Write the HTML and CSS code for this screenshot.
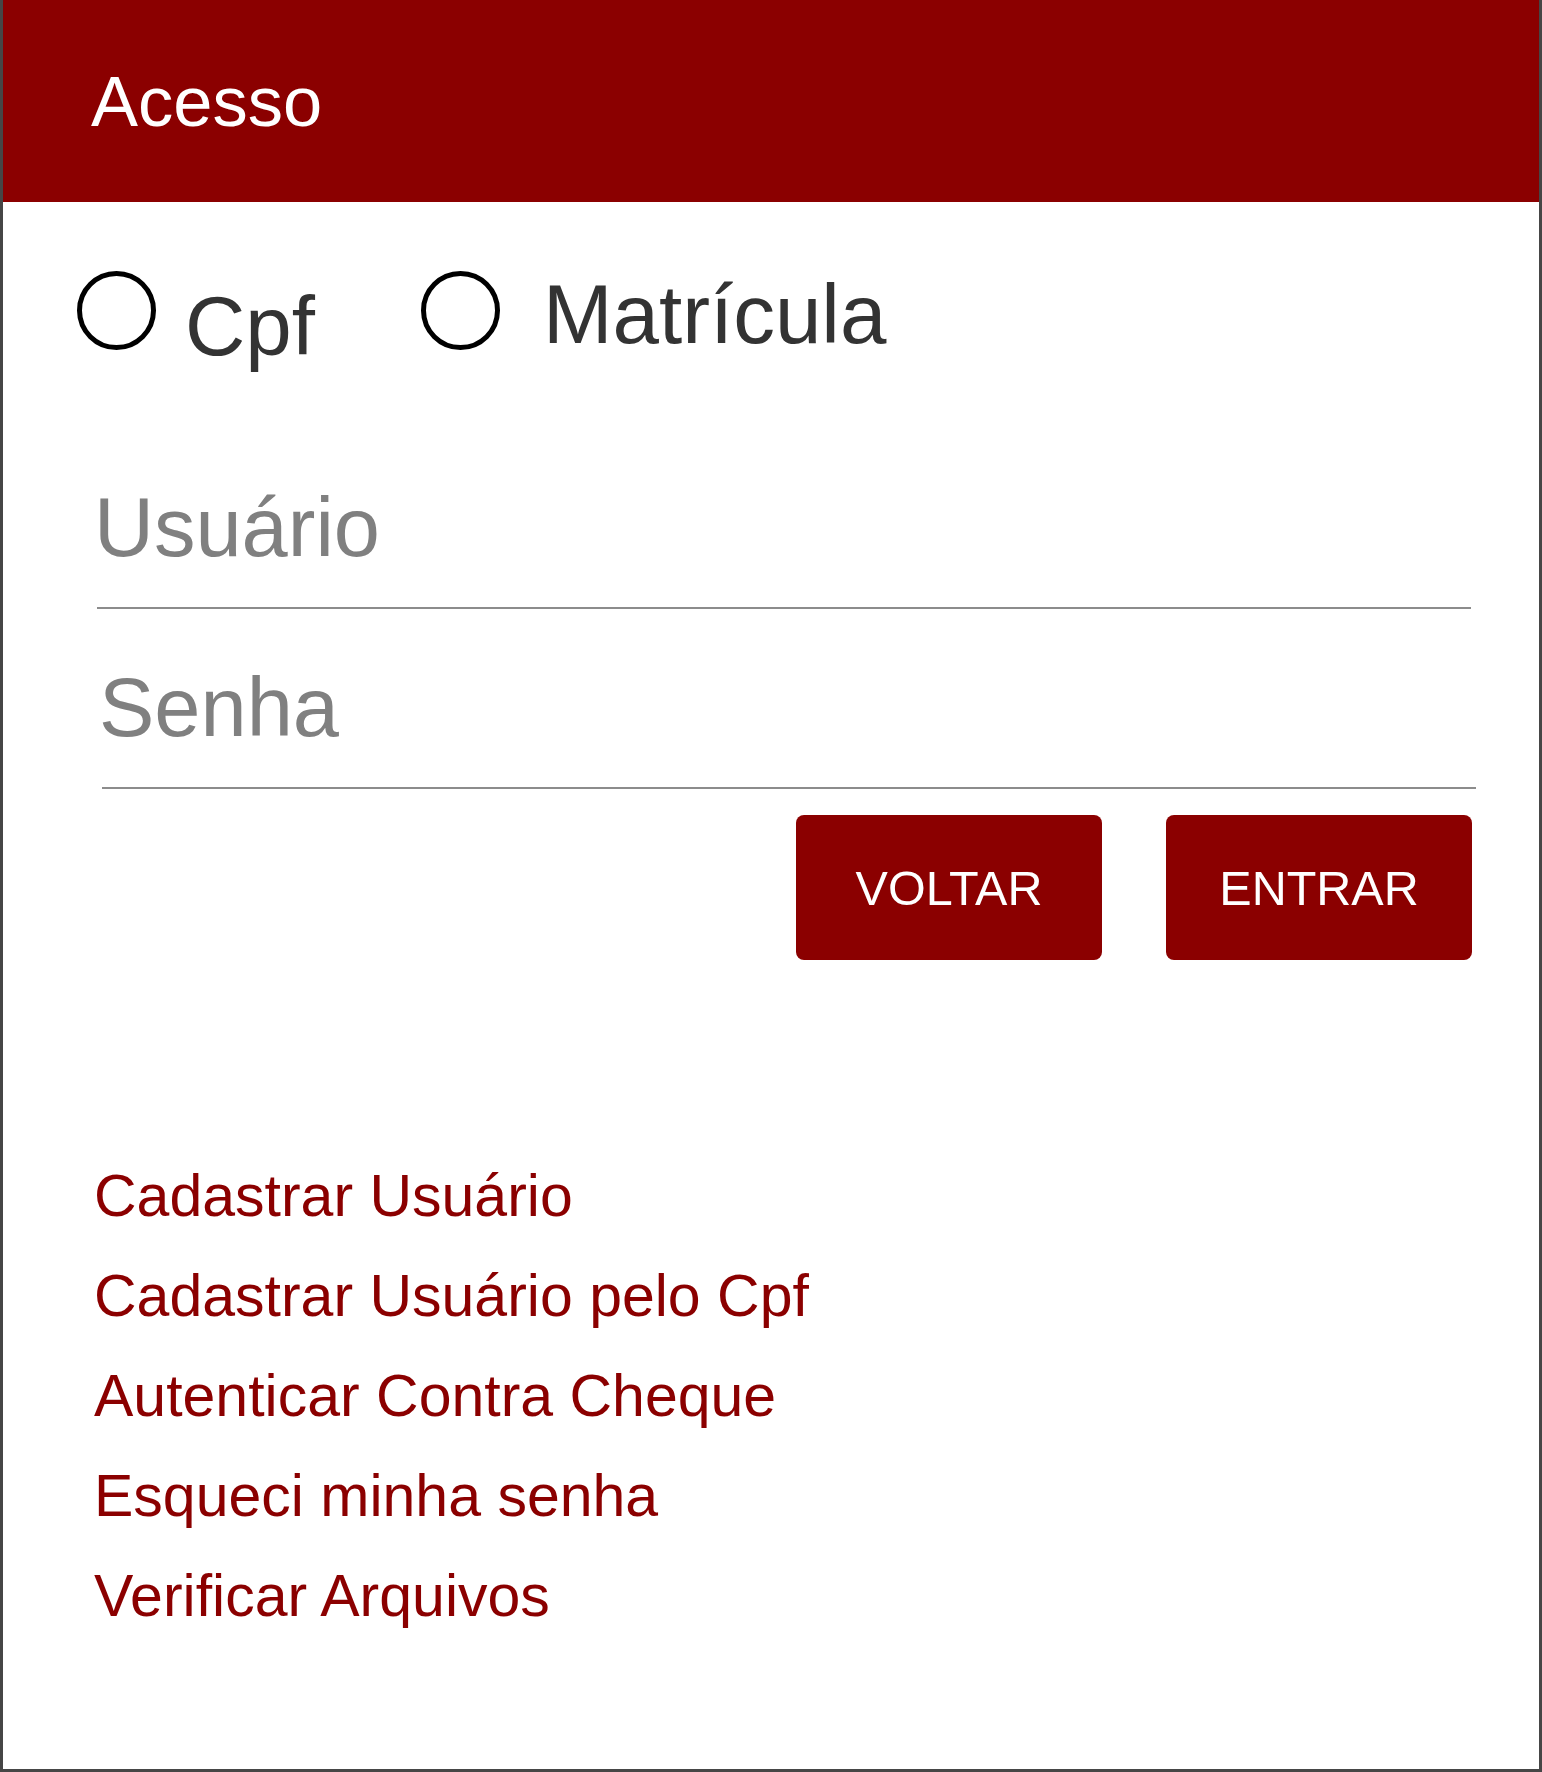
FILE: index.html
```html
<!DOCTYPE html>
<html lang="pt-BR">
<head>
<meta charset="utf-8">
<title>Acesso</title>
<link rel="stylesheet" href="styles.css">
</head>
<body>
<div class="card">
  <header class="card-header">
    <h1 class="card-title">Acesso</h1>
  </header>

  <div class="radio-row">
    <label class="radio-option">
      <input class="radio" type="radio" name="tipo" value="cpf">
      <span class="radio-label radio-label-cpf">Cpf</span>
    </label>
    <label class="radio-option">
      <input class="radio" type="radio" name="tipo" value="matricula">
      <span class="radio-label radio-label-mat">Matrícula</span>
    </label>
  </div>

  <div class="field field-user">
    <span class="field-text field-text-user">Usuário</span>
  </div>
  <div class="field field-pass">
    <span class="field-text field-text-pass">Senha</span>
  </div>

  <div class="actions">
    <button class="btn" type="button">VOLTAR</button>
    <button class="btn" type="button">ENTRAR</button>
  </div>

  <nav class="links">
    <a class="link" href="#">Cadastrar Usuário</a>
    <a class="link" href="#">Cadastrar Usuário pelo Cpf</a>
    <a class="link" href="#">Autenticar Contra Cheque</a>
    <a class="link" href="#">Esqueci minha senha</a>
    <a class="link" href="#">Verificar Arquivos</a>
  </nav>
</div>
</body>
</html>
```

FILE: styles.css
```css
* {
  box-sizing: border-box;
}

html, body {
  margin: 0;
  padding: 0;
  background: #ffffff;
}

body {
  font-family: "Liberation Sans", Arial, sans-serif;
}

.card {
  width: 1542px;
  height: 1772px;
  border: 3px solid #464646;
  border-top: 0;
  background: #ffffff;
  overflow: hidden;
}

.card-header {
  height: 202px;
  background: #8b0000;
  display: flex;
  align-items: center;
  padding-left: 89px;
  margin: 0 -1px 0 -1px;
}

.card-title {
  margin: 0;
  font-weight: normal;
  font-size: 70.5px;
  line-height: 70px;
  color: #ffffff;
  padding-top: 2px;
}

.radio-row {
  display: flex;
  align-items: flex-start;
  padding-left: 74px;
  margin-top: 69px;
}

.radio-option {
  display: flex;
  align-items: flex-start;
}

.radio-option + .radio-option {
  margin-left: 106px;
}

.radio {
  -webkit-appearance: none;
  appearance: none;
  margin: 0;
  width: 79px;
  height: 79px;
  border: 5px solid #000000;
  border-radius: 50%;
  background: #ffffff;
  flex: none;
}

.radio-label {
  font-size: 83.5px;
  line-height: 82px;
  color: #333333;
}

.radio-label-cpf {
  margin-left: 29px;
  margin-top: 14px;
}

.radio-label-mat {
  margin-left: 43px;
  margin-top: 2px;
}

.field {
  width: 1374px;
  border-bottom: 2px solid #8c8c8c;
  padding-bottom: 38px;
}

.field-user {
  margin-left: 94px;
  margin-top: 120px;
}

.field-pass {
  margin-left: 99px;
  margin-top: 58px;
}

.field-text {
  display: block;
  font-size: 83px;
  line-height: 82px;
  color: #808080;
}

.field-text-user {
  margin-left: -3px;
}

.field-text-pass {
  margin-left: -3px;
}

.actions {
  display: flex;
  justify-content: flex-end;
  gap: 64px;
  padding-right: 67px;
  margin-top: 26px;
}

.btn {
  width: 306px;
  height: 145px;
  border: 0;
  border-radius: 8px;
  background: #8b0000;
  color: #ffffff;
  font-family: "Liberation Sans", Arial, sans-serif;
  font-size: 48.5px;
  line-height: 1;
  padding: 0;
  padding-top: 2px;
}

.links {
  display: flex;
  flex-direction: column;
  align-items: flex-start;
  padding-left: 91px;
  margin-top: 186px;
}

.link {
  font-size: 59px;
  line-height: 100px;
  color: #8b0000;
  text-decoration: none;
}
```
